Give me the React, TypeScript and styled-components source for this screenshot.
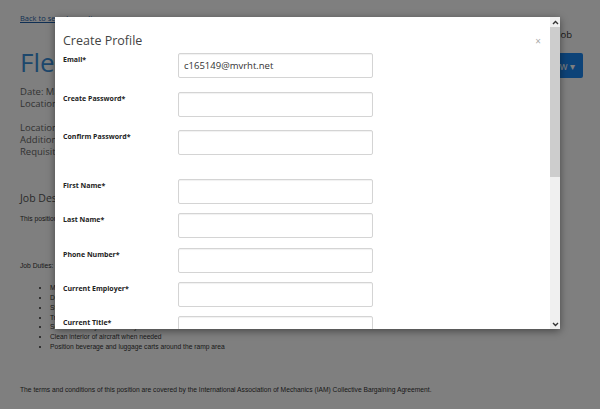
import { createGlobalStyle } from 'styled-components';
import styled from 'styled-components';

const GlobalStyle = createGlobalStyle`
  html, body {
    margin: 0;
    padding: 0;
    width: 600px;
    height: 409px;
    overflow: hidden;
    background: #fff;
  }
  * { box-sizing: border-box; }
`;

const Page = styled.div`
  position: relative;
  width: 600px;
  height: 409px;
  padding: 13px 17px 0 20px;
  font-family: 'Liberation Sans', Arial, sans-serif;
  color: #333;
`;

const BackLink = styled.a`
  display: block;
  font-family: 'Open Sans', sans-serif;
  font-size: 7.5px;
  line-height: 10px;
  color: #1f5fa8;
  text-decoration: underline;
`;

const HeaderRow = styled.div`
  display: flex;
  justify-content: space-between;
  align-items: flex-start;
  margin-top: 6px;
`;

const JobTitle = styled.h1`
  margin: 18px 0 0;
  font-family: 'Open Sans', sans-serif;
  font-weight: 400;
  font-size: 26px;
  line-height: 30px;
  color: #3a8fd8;
`;

const Actions = styled.div`
  display: flex;
  flex-direction: column;
  align-items: flex-end;
  gap: 12px;
`;

const SaveLink = styled.span`
  font-family: 'Open Sans', sans-serif;
  font-size: 9.5px;
  line-height: 12px;
  margin-right: 11px;
  color: #333;
`;

const ApplyButton = styled.button`
  height: 25px;
  padding: 0 8px;
  border: 0;
  border-radius: 2px;
  background: #1b86f0;
  color: #fff;
  font-family: 'Open Sans', sans-serif;
  font-size: 10px;
`;

const Meta = styled.div<{ $top: number }>`
  margin-top: ${p => p.$top}px;
  font-family: 'Open Sans', sans-serif;
  font-size: 9.5px;
  line-height: 12px;
  color: #666;
`;

const SectionTitle = styled.h2`
  margin: 33px 0 0;
  font-family: 'Open Sans', sans-serif;
  font-weight: 400;
  font-size: 10.5px;
  line-height: 14px;
  color: #555;
`;

const Para = styled.p<{ $top: number }>`
  margin: ${p => p.$top}px 0 0;
  font-size: 6.7px;
  line-height: 10px;
  color: #333;
`;

const Duties = styled.ul`
  margin: 12px 0 0;
  padding-left: 30px;
  font-size: 6.7px;
  line-height: 9.85px;
  color: #333;
`;

const Overlay = styled.div`
  position: absolute;
  inset: 0;
  background: rgba(0, 0, 0, 0.5);
`;

const Modal = styled.div`
  position: absolute;
  left: 55px;
  top: 17px;
  width: 505px;
  height: 312px;
  display: flex;
  background: #fff;
  box-shadow: 0 2px 8px rgba(0, 0, 0, 0.45);
  font-family: 'Open Sans', sans-serif;
`;

const ModalBody = styled.div`
  flex: 1;
  overflow: hidden;
  padding: 15px 9px 0 8px;
`;

const ModalHeader = styled.div`
  display: flex;
  justify-content: space-between;
  align-items: center;
  margin-bottom: 3px;
`;

const ModalTitle = styled.h3`
  margin: 0;
  font-size: 12.5px;
  font-weight: 400;
  line-height: 18px;
  color: #444;
`;

const Close = styled.span`
  font-size: 10px;
  line-height: 10px;
  color: #aaa;
`;

const Group = styled.div<{ $gap: number; $top?: number }>`
  display: flex;
  flex-direction: column;
  gap: ${p => p.$gap}px;
  margin-top: ${p => p.$top ?? 0}px;
`;

const Row = styled.div`
  display: grid;
  grid-template-columns: 115px 195px;
  align-items: start;
`;

const Label = styled.label`
  padding-top: 2px;
  font-size: 7px;
  line-height: 10px;
  font-weight: 700;
  color: #222;
`;

const Input = styled.input`
  height: 25px;
  width: 195px;
  padding: 0 5px;
  border: 1px solid #d4d4d4;
  border-radius: 2px;
  box-shadow: inset 0 1px 1px rgba(0, 0, 0, 0.06);
  font-family: 'Open Sans', sans-serif;
  font-size: 9.5px;
  color: #333;
  background: #fff;
  outline: none;
`;

const Scrollbar = styled.div`
  width: 10px;
  display: flex;
  flex-direction: column;
  background: #f0f0f0;
`;

const ScrollArrow = styled.div`
  height: 10px;
  display: flex;
  align-items: center;
  justify-content: center;
`;

const Thumb = styled.div`
  height: 150px;
  background: #cdcdcd;
`;

const Track = styled.div`
  flex: 1;
`;

const Arrow = ({ up }: { up?: boolean }) => (
  <svg width="7" height="5" viewBox="0 0 7 5">
    <polyline
      points={up ? '1,4 3.5,1.5 6,4' : '1,1 3.5,3.5 6,1'}
      fill="none"
      stroke="#333"
      strokeWidth="1.4"
    />
  </svg>
);

const duties = [
  'Marshal aircraft in and out of the gate',
  'Drive tugs, belt loaders and other ground equipment',
  'Stock galley and cabin supplies',
  'Transport baggage and cargo to and from aircraft',
  'Service lavatory and water systems',
  'Clean interior of aircraft when needed',
  'Position beverage and luggage carts around the ramp area',
];

const groupOne = [
  { label: 'Email*', value: 'c165149@mvrht.net' },
  { label: 'Create Password*', value: '' },
  { label: 'Confirm Password*', value: '' },
];

const groupTwo = ['First Name*', 'Last Name*', 'Phone Number*', 'Current Employer*', 'Current Title*'];

export default function App() {
  return (
    <>
      <GlobalStyle />
      <Page>
        <BackLink>Back to search results</BackLink>
        <HeaderRow>
          <JobTitle>Fleet Service Agent</JobTitle>
          <Actions>
            <SaveLink>Save Job</SaveLink>
            <ApplyButton>Apply Now ▾</ApplyButton>
          </Actions>
        </HeaderRow>
        <Meta $top={8}>
          Date: May 14, 2019
          <br />
          Location: Anchorage, AK
        </Meta>
        <Meta $top={12}>
          Location Type: Airport
          <br />
          Additional Locations: None
          <br />
          Requisition #: 165149
        </Meta>
        <SectionTitle>Job Description</SectionTitle>
        <Para $top={9}>This position is responsible for the safe and efficient handling of aircraft on the ramp.</Para>
        <Para $top={37}>Job Duties:</Para>
        <Duties>
          {duties.map(d => (
            <li key={d}>{d}</li>
          ))}
        </Duties>
        <Para $top={33}>
          The terms and conditions of this position are covered by the International Association of Mechanics (IAM)
          Collective Bargaining Agreement.
        </Para>
        <Overlay />
        <Modal>
          <ModalBody>
            <ModalHeader>
              <ModalTitle>Create Profile</ModalTitle>
              <Close>×</Close>
            </ModalHeader>
            <Group $gap={13.5}>
              {groupOne.map(f => (
                <Row key={f.label}>
                  <Label>{f.label}</Label>
                  <Input type={f.label.includes('Password') ? 'password' : 'text'} defaultValue={f.value} />
                </Row>
              ))}
            </Group>
            <Group $gap={9.3} $top={24}>
              {groupTwo.map(l => (
                <Row key={l}>
                  <Label>{l}</Label>
                  <Input type="text" />
                </Row>
              ))}
            </Group>
          </ModalBody>
          <Scrollbar>
            <ScrollArrow>
              <Arrow up />
            </ScrollArrow>
            <Thumb />
            <Track />
            <ScrollArrow>
              <Arrow />
            </ScrollArrow>
          </Scrollbar>
        </Modal>
      </Page>
    </>
  );
}
